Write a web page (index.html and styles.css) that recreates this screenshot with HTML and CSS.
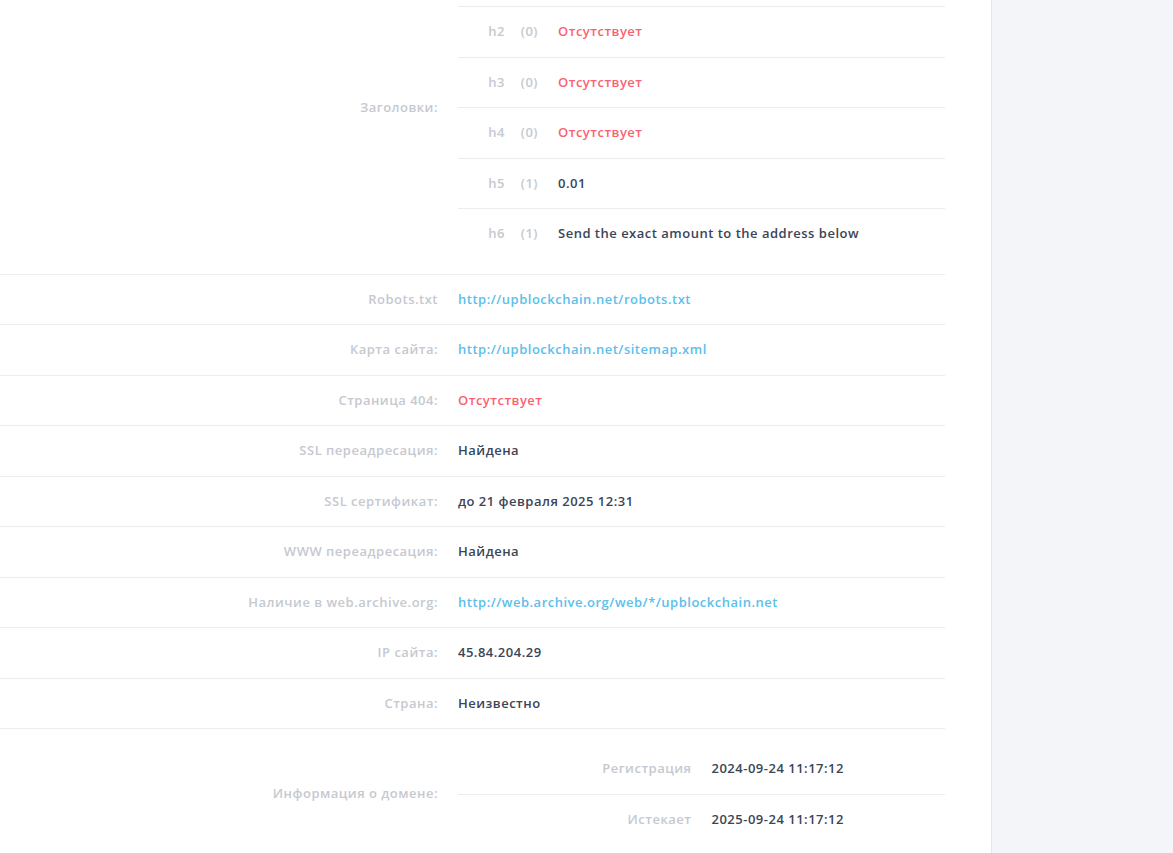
FILE: index.html
```html
<!DOCTYPE html>
<html lang="ru">
<head>
  <meta charset="UTF-8">
  <title>Анализ сайта upblockchain.net</title>
  <link rel="stylesheet" href="styles.css">
</head>
<body>
  <div class="layout">
    <div class="main">
      <div class="report">
        <div class="row">
          <div class="row-label">Заголовки:</div>
          <div class="row-value nested headings">
            <div class="sub-row heading">
              <span class="tag">h2</span><span class="count">(0)</span><span class="text missing">Отсутствует</span>
            </div>
            <div class="sub-row heading">
              <span class="tag">h3</span><span class="count">(0)</span><span class="text missing">Отсутствует</span>
            </div>
            <div class="sub-row heading">
              <span class="tag">h4</span><span class="count">(0)</span><span class="text missing">Отсутствует</span>
            </div>
            <div class="sub-row heading">
              <span class="tag">h5</span><span class="count">(1)</span><span class="text">0.01</span>
            </div>
            <div class="sub-row heading">
              <span class="tag">h6</span><span class="count">(1)</span><span class="text">Send the exact amount to the address below</span>
            </div>
          </div>
        </div>
        <div class="row">
          <div class="row-label">Robots.txt</div>
          <div class="row-value"><a class="link" href="#">http://upblockchain.net/robots.txt</a></div>
        </div>
        <div class="row">
          <div class="row-label">Карта сайта:</div>
          <div class="row-value"><a class="link" href="#">http://upblockchain.net/sitemap.xml</a></div>
        </div>
        <div class="row">
          <div class="row-label">Страница 404:</div>
          <div class="row-value missing">Отсутствует</div>
        </div>
        <div class="row">
          <div class="row-label">SSL переадресация:</div>
          <div class="row-value">Найдена</div>
        </div>
        <div class="row">
          <div class="row-label">SSL сертификат:</div>
          <div class="row-value">до 21 февраля 2025 12:31</div>
        </div>
        <div class="row">
          <div class="row-label">WWW переадресация:</div>
          <div class="row-value">Найдена</div>
        </div>
        <div class="row">
          <div class="row-label">Наличие в web.archive.org:</div>
          <div class="row-value"><a class="link" href="#">http://web.archive.org/web/*/upblockchain.net</a></div>
        </div>
        <div class="row">
          <div class="row-label">IP сайта:</div>
          <div class="row-value">45.84.204.29</div>
        </div>
        <div class="row">
          <div class="row-label">Страна:</div>
          <div class="row-value">Неизвестно</div>
        </div>
        <div class="row">
          <div class="row-label">Информация о домене:</div>
          <div class="row-value nested">
            <div class="sub-row domain">
              <span class="domain-label">Регистрация</span><span class="domain-value">2024-09-24 11:17:12</span>
            </div>
            <div class="sub-row domain">
              <span class="domain-label">Истекает</span><span class="domain-value">2025-09-24 11:17:12</span>
            </div>
          </div>
        </div>
      </div>
    </div>
    <div class="aside"></div>
  </div>
</body>
</html>
```
FILE: styles.css
```css
body {
  margin: 0;
  font-family: "Open Sans", Arial, sans-serif;
  font-size: 13px;
  font-weight: 600;
  letter-spacing: 0.5px;
  color: #3b4556;
  background: #fff;
}
.layout {
  display: flex;
  min-height: 100vh;
  overflow: hidden;
}
.main {
  width: 945px;
  padding-right: 46px;
  border-right: 1px solid #e4e6ea;
  background: #fff;
}
.aside {
  flex: 1;
  background: #f4f5f8;
}
.report {
  margin-top: -60px;
}
.row {
  display: grid;
  grid-template-columns: 448px 1fr;
  border-top: 1px solid #ececee;
  line-height: 19.5px;
}
.row-label {
  align-self: center;
  text-align: right;
  padding-right: 10px;
  color: #c5c9d0;
}
.row-value {
  padding: 15px 0 15px 10px;
}
.headings {
  padding-top: 65px;
}
.headings .sub-row:first-child {
  border-top: 1px solid #ececee;
}
.sub-row {
  display: grid;
  padding: 15px 0;
  border-bottom: 1px solid #ececee;
}
.sub-row:last-child {
  border-bottom: none;
}
.heading {
  grid-template-columns: 57px 33px 1fr;
}
.tag,
.count {
  text-align: right;
  padding-right: 10px;
  color: #c5c9d0;
}
.heading .text {
  padding-left: 10px;
}
.domain {
  grid-template-columns: 1fr 1fr;
}
.domain-label {
  text-align: right;
  padding-right: 10px;
  color: #c5c9d0;
}
.domain-value {
  padding-left: 10px;
}
.missing {
  color: #fb5f72;
}
.link {
  color: #5bc0eb;
  text-decoration: none;
}
```
